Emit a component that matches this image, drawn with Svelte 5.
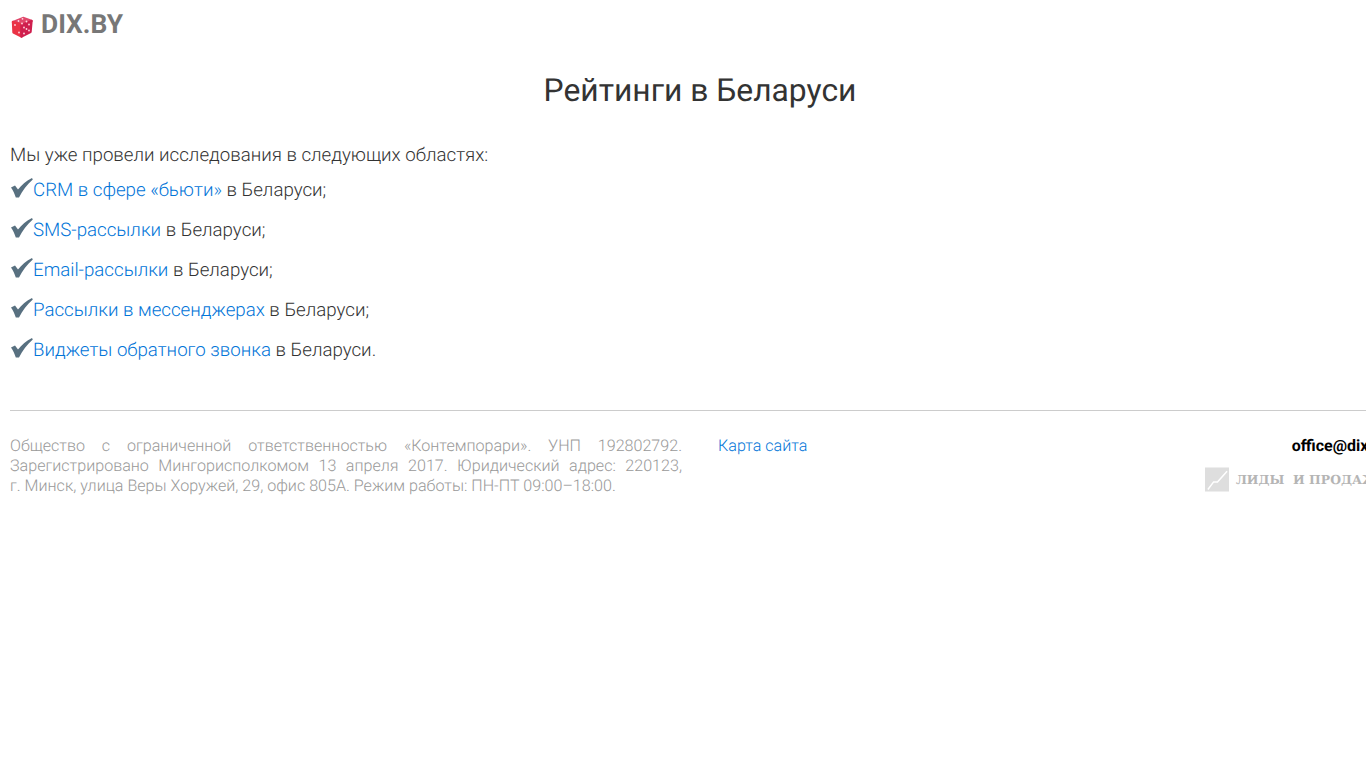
<script lang="ts">
  const items = [
    { link: 'CRM в сфере «бьюти»', rest: ' в Беларуси;' },
    { link: 'SMS-рассылки', rest: ' в Беларуси;' },
    { link: 'Email-рассылки', rest: ' в Беларуси;' },
    { link: 'Рассылки в мессенджерах', rest: ' в Беларуси;' },
    { link: 'Виджеты обратного звонка', rest: ' в Беларуси.' }
  ];
</script>

<div class="page">
  <header class="header">
    <a class="logo" href="#top">
      <svg class="dice" viewBox="0 0 24 24" width="24" height="24" aria-hidden="true">
        <g stroke-linejoin="round" stroke-width="2.400">
          <path d="M13 3 21.500 6 11.500 10 3 7Z" fill="#e0476a" stroke="#e0476a" />
          <path d="M3 7 11.500 10 11.500 21.500 3.500 17.500Z" fill="#ea3345" stroke="#ea3345" />
          <path d="M11.500 10 21.500 6 20.500 17 11.500 21.500Z" fill="#cf1f4e" stroke="#cf1f4e" />
        </g>
        <g fill="#ffd5df">
          <circle cx="12.500" cy="3.800" r=".9" /><circle cx="8.500" cy="6" r=".9" /><circle cx="16.500" cy="6.500" r=".9" /><circle cx="12" cy="8.500" r=".9" />
          <circle cx="5" cy="10" r=".9" /><circle cx="9" cy="17.500" r=".9" />
          <circle cx="14" cy="12.500" r=".9" /><circle cx="19" cy="9.500" r=".9" /><circle cx="16.500" cy="14" r=".9" /><circle cx="14" cy="18.500" r=".9" /><circle cx="19" cy="15.500" r=".9" />
        </g>
      </svg>
      <span>DIX.BY</span>
    </a>
  </header>

  <h1>Рейтинги в Беларуси</h1>

  <p class="intro">Мы уже провели исследования в следующих областях:</p>
  {#each items as item}
    <p class="item">
      <svg class="check" viewBox="0 0 23 20" width="23" height="20" aria-hidden="true">
        <path d="M1 9.500 5 7.500 8 11.500C11.500 7 16.500 2.800 22 0L22.800 1.500C17 6.500 12.500 12.500 9 19.500H5.800C4.800 16 3 12.500 1 9.500Z" fill="#587080" />
      </svg><a href="#top">{item.link}</a>{item.rest}
    </p>
  {/each}

  <footer class="footer">
    <div class="legal">Общество с ограниченной ответственностью «Контемпорари». УНП 192802792. Зарегистрировано Мингорисполкомом 13 апреля 2017. Юридический адрес: 220123, г.&nbsp;Минск, улица Веры Хоружей, 29, офис 805А. Режим работы: ПН-ПТ 09:00–18:00.</div>
    <div class="sitemap"><a href="#top">Карта сайта</a></div>
    <div class="contacts">
      <a class="mail" href="#top">office@dix.by</a>
      <div class="slogan">
        <svg viewBox="0 0 25 25" width="24" height="25" aria-hidden="true">
          <rect width="25" height="25" fill="#dedede" />
          <path d="M3 23 9 15 13 15 23 4" fill="none" stroke="#fff" stroke-width="1.600" />
        </svg>
        <span>ЛИДЫ&nbsp; И ПРОДАЖИ</span>
      </div>
    </div>
  </footer>
</div>

<style>
  :global(body) {
    overflow-x: hidden;
    background: #fff;
  }

  .page {
    box-sizing: border-box;
    width: 1400px;
    padding: 0 10px;
    font-family: Roboto, "Liberation Sans", sans-serif;
    font-weight: 300;
    font-size: 18.7px;
    line-height: 24px;
    color: #333;
    text-rendering: geometricPrecision;
  }

  a {
    color: #0275d8;
    text-decoration: none;
  }

  .header {
    height: 50px;
  }

  .logo {
    display: inline-flex;
    align-items: center;
    gap: 7px;
    height: 50px;
    font-size: 26.4px;
    font-weight: 700;
    color: #777;
  }

  .dice {
    width: 24px;
    height: 24px;
    margin-top: 3px;
  }

  h1 {
    margin: 21px 0 0;
    font-size: 31.8px;
    line-height: 38px;
    font-weight: 400;
    text-align: center;
  }

  .intro {
    margin: 34px 0 0;
  }

  .item {
    margin: 0 0 16px;
    white-space: pre-wrap;
  }

  .intro + .item {
    margin-top: 11px;
  }

  .check {
    vertical-align: -2px;
  }

  .footer {
    display: flex;
    margin-top: 48px;
    padding-top: 25px;
    border-top: 1px solid #ccc;
    font-size: 16.1px;
    line-height: 20px;
  }

  .legal {
    width: 672px;
    color: #999;
    text-align: justify;
  }

  .sitemap {
    margin-left: 36px;
  }

  .contacts {
    margin-left: auto;
    text-align: right;
  }

  .mail {
    color: #000;
    font-weight: 700;
    font-size: 16px;
  }

  .slogan {
    display: flex;
    align-items: center;
    gap: 7px;
    margin-top: 11px;
    font-family: "DejaVu Serif", serif;
    font-size: 12.4px;
    font-weight: 700;
    color: #b5b5b5;
  }
</style>
